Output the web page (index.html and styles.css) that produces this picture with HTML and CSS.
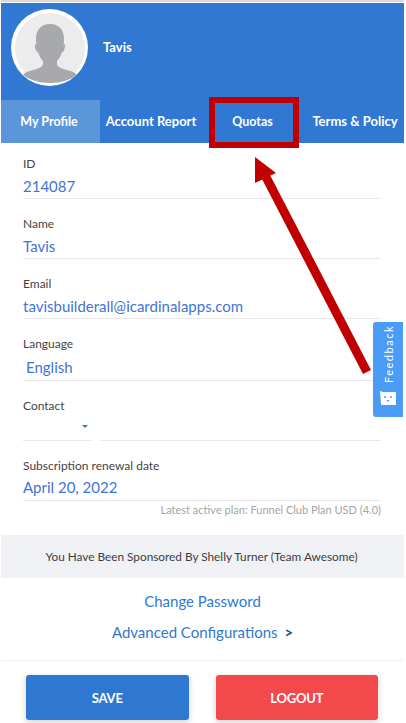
FILE: index.html
```html
<!DOCTYPE html>
<html lang="en">
<head>
  <meta charset="UTF-8" />
  <meta name="viewport" content="width=device-width, initial-scale=1.0"/>
  <title>My Profile</title>
  <link rel="stylesheet" href="styles.css">
</head>
<body>

  <div class="page">
    <div class="header">
      <div class="avatar">
        <svg viewBox="0 0 70 70" width="70" height="70">
          <circle cx="35" cy="35" r="35" fill="#ececec"/>
          <path fill="#a7a9ac" d="M35 11c-10 0-14 7-14 15 0 2 0 3 .5 5-1.500 0-2 1-1.500 3 .5 3 1.500 5 3 5 1 4 3 7 5 9v3c0 2-3 4-8 5.500-5 1.500-9 2-12 5C14 67 24 70 35 70s21-3 27-8.500c-3-3-7-3.500-12-5-5-1.500-8-3.500-8-5.500v-3c2-2 4-5 5-9 1.500 0 2.500-2 3-5 .5-2 0-3-1.500-3 .5-2 .5-3 .5-5 0-8-4-15-14-15z"/>
        </svg>
      </div>
      <div class="username">Tavis</div>
    </div>

    <div class="tabs">
      <div class="tab tab-active">My Profile</div>
      <div class="tab tab-report">Account Report</div>
      <div class="tab tab-quotas">Quotas</div>
      <div class="tab tab-terms">Terms &amp; Policy</div>
    </div>

    <div class="form">
      <div class="field">
        <label>ID</label>
        <div class="value">214087</div>
      </div>
      <div class="field">
        <label>Name</label>
        <div class="value">Tavis</div>
      </div>
      <div class="field">
        <label>Email</label>
        <div class="value">tavisbuilderall@icardinalapps.com</div>
      </div>
      <div class="field field-lang">
        <label>Language</label>
        <div class="value">English</div>
      </div>
      <div class="field field-contact">
        <label>Contact</label>
        <div class="contact-row">
          <div class="contact-code"><span class="caret"></span></div>
          <div class="contact-number"></div>
        </div>
      </div>
      <div class="field field-date">
        <label>Subscription renewal date</label>
        <div class="value">April 20, 2022</div>
      </div>
      <div class="plan-note">Latest active plan: Funnel Club Plan USD (4.0)</div>
    </div>

    <div class="sponsor">You Have Been Sponsored By Shelly Turner (Team Awesome)</div>

    <div class="links">
      <a class="link">Change Password</a>
      <a class="link">Advanced Configurations <span class="chevron">&gt;</span></a>
    </div>

    <div class="actions">
      <button class="btn btn-save">SAVE</button>
      <button class="btn btn-logout">LOGOUT</button>
    </div>
  </div>

  <div class="feedback">
    <span class="feedback-text">Feedback</span>
    <svg viewBox="0 0 16 14" width="16" height="14">
      <path fill="#fff" d="M0 0l3 1h12a1 1 0 0 1 1 1v11a1 1 0 0 1-1 1H2a1 1 0 0 1-1-1z"/>
      <circle cx="5" cy="6" r="1" fill="#4a9cf6"/>
      <circle cx="11" cy="6" r="1" fill="#4a9cf6"/>
      <path fill="#4a9cf6" d="M6.500 9h3l-1.500 2z"/>
    </svg>
  </div>

  <!-- annotation drawn over the screenshot -->
  <div class="callout"></div>
  <svg class="arrow" viewBox="0 0 406 723" width="406" height="723">
    <line x1="367" y1="372" x2="266" y2="177" stroke="#c00000" stroke-width="9"/>
    <polygon fill="#c00000" points="255,157 255,183 276,173"/>
  </svg>

</body>
</html>
```

FILE: styles.css
```css
* {
  box-sizing: border-box;
}

html, body {
  height: 100%;
}

body {
  font-family: 'Lato', 'Noto Sans', sans-serif;
  background-color: #fff;
  color: #3d3d3d;
  margin: 0;
  padding: 0;
  overflow: hidden;
}

.page {
  width: 403px;
  margin-left: 1px;
  padding-top: 1px;
  border-top: 2px solid #d9d9d9;
  height: 723px;
}

.header {
  background-color: #3178d3;
  height: 97px;
  display: flex;
  align-items: flex-start;
  padding-left: 10px;
  padding-top: 6px;
}

.avatar {
  width: 77px;
  height: 77px;
  border-radius: 50%;
  background: #fff;
  display: flex;
  align-items: center;
  justify-content: center;
  overflow: hidden;
  flex-shrink: 0;
}

.avatar svg {
  display: block;
}

.username {
  color: #fff;
  font-weight: 700;
  font-size: 13px;
  margin-left: 15px;
  margin-top: 30px;
}

.tabs {
  display: flex;
  background-color: #3178d3;
  height: 43px;
}

.tab {
  color: #fff;
  font-weight: 700;
  font-size: 13px;
  display: flex;
  align-items: center;
  justify-content: center;
  white-space: nowrap;
}

.tab-active {
  width: 99px;
  padding-right: 3px;
  background-color: #5b96db;
  font-size: 12.500px;
}

.tab-report {
  width: 102px;
  padding-bottom: 1px;
}

.tab-quotas {
  width: 101px;
  font-size: 12.500px;
}

.tab-terms {
  width: 101px;
  padding-left: 3px;
  padding-bottom: 1px;
}

.form {
  padding: 14px 0 0 22px;
  width: 380px;
}

.field {
  height: 60px;
}

.field label {
  display: block;
  font-size: 12px;
  line-height: 14px;
  margin-bottom: 1px;
  color: #444;
}

.value {
  color: #3f74d6;
  font-size: 15px;
  line-height: 20px;
  height: 27px;
  padding-top: 4px;
  border-bottom: 1px solid #e8e8ea;
}

.field-lang {
  height: 62px;
}

.field-lang .value {
  padding-left: 3px;
  height: 29px;
  padding-top: 5px;
}

.contact-row {
  display: flex;
  gap: 8px;
  height: 27px;
}

.contact-code {
  width: 69px;
  border-bottom: 1px solid #e8e8ea;
  position: relative;
}

.contact-number {
  flex: 1;
  border-bottom: 1px solid #e8e8ea;
}

.caret {
  position: absolute;
  right: 4px;
  top: 11px;
  border-left: 3px solid transparent;
  border-right: 3px solid transparent;
  border-top: 3px solid #3178d3;
}

.field-date {
  height: 43px;
}

.field-date .value {
  padding-top: 3px;
}

.plan-note {
  color: #a5a5a5;
  font-size: 11px;
  text-align: right;
  margin-top: 1px;
  line-height: 14px;
}

.sponsor {
  margin-top: 18px;
  height: 43px;
  background-color: #f0f1f5;
  font-size: 11.800px;
  color: #3d3d3d;
  display: flex;
  align-items: center;
  justify-content: center;
  padding-right: 2px;
}

.links {
  height: 83px;
  border-bottom: 1px solid #f0f0f0;
  display: flex;
  flex-direction: column;
  align-items: center;
  padding-top: 13px;
  gap: 11px;
}

.link {
  color: #3178d3;
  font-size: 15px;
  line-height: 20px;
}

.chevron {
  color: #1f4e96;
  font-weight: 700;
  margin-left: 3px;
}

.actions {
  display: flex;
  padding: 14px 26px 0 25px;
  gap: 27px;
}

.btn {
  height: 45px;
  border: none;
  border-radius: 3px;
  color: #fff;
  font-family: inherit;
  font-weight: 700;
  font-size: 13px;
  letter-spacing: -0.2px;
  box-shadow: 0 2px 6px rgba(0, 0, 0, 0.2);
  flex: 1;
}

.btn-save {
  background-color: #2f78d1;
}

.btn-logout {
  background-color: #f4494b;
}

.feedback {
  position: absolute;
  left: 373px;
  top: 322px;
  width: 30px;
  height: 95px;
  background-color: #4a9cf6;
  border-radius: 3px 0 0 3px;
  display: flex;
  flex-direction: column;
  align-items: center;
  justify-content: flex-end;
  padding-bottom: 12px;
  gap: 8px;
}

.feedback-text {
  writing-mode: vertical-rl;
  transform: rotate(180deg);
  color: #fff;
  font-size: 11px;
  letter-spacing: 1.500px;
}

.callout {
  position: absolute;
  left: 209px;
  top: 97px;
  width: 90px;
  height: 51px;
  border: 6px solid #c00000;
}

.arrow {
  position: absolute;
  left: 0;
  top: 0;
}
```
